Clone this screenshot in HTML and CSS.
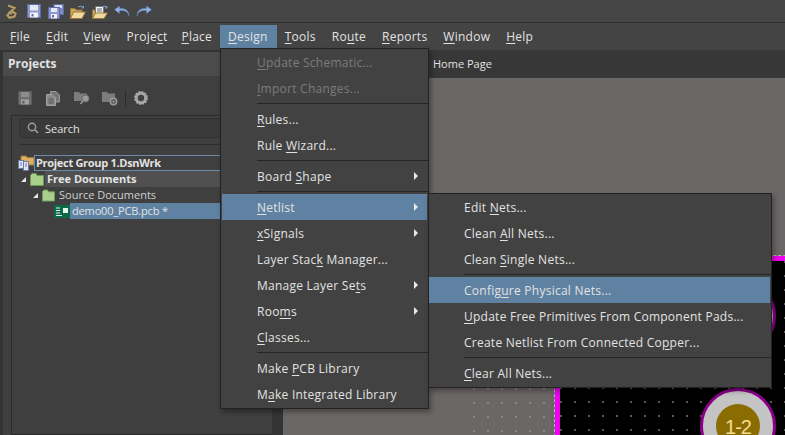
FILE: index.html
```html
<!DOCTYPE html>
<html lang="en">
  <head>
    <meta charset="UTF-8" />
    <title>Altium Designer</title>
    <link rel="stylesheet" href="styles.css">
  </head>

  <body>
    <div class="app">
      <!-- quick access bar -->
      <div class="quick">
        <svg class="logo" width="11" height="15" viewBox="0 0 11 15"><path d="M2 1.500 L8.500 4 L5.500 6.800 L9.500 9.500 L8.500 12.500 L3.500 13.800 L1.500 11.500 L3.500 8.500 L6 9.800" fill="none" stroke="#b49a62" stroke-width="2.200"/></svg>
        <svg class="q1" width="14" height="14" viewBox="0 0 14 14"><rect x=".5" y=".5" width="13" height="13" fill="#8d9ad0" stroke="#5f6ba6"/><rect x="3" y="1" width="8" height="5.500" fill="#e6e9f6"/><rect x="3" y="8.500" width="8" height="5" fill="#f4f4f4"/><rect x="4.500" y="10" width="2" height="2.500" fill="#5f6ba6"/></svg>
        <svg class="q2" width="16" height="15" viewBox="0 0 16 15"><rect x="5.500" y=".5" width="10" height="10" fill="#7f8cc4" stroke="#5f6ba6"/><rect x="7" y="1" width="7" height="3" fill="#d8dcf0"/><rect x=".5" y="3.500" width="11" height="11" fill="#8d9ad0" stroke="#5f6ba6"/><rect x="3" y="4" width="6" height="4" fill="#e6e9f6"/><rect x="3" y="10" width="6" height="4.500" fill="#f4f4f4"/><rect x="4" y="11" width="2" height="2.500" fill="#5f6ba6"/></svg>
        <svg class="q3" width="16" height="14" viewBox="0 0 16 14"><path d="M.5 3.500 H5 L6 5 H12 V13.500 H.5 Z" fill="#c9a860" stroke="#98793a"/><path d="M.5 13.500 L3.500 7 H15.500 L12 13.500 Z" fill="#f0d9a0" stroke="#98793a"/><path d="M8 2 Q11 0 13.500 2.500 M13.500 .8 V3 H11.500" fill="none" stroke="#7f9fc8"/></svg>
        <svg class="q4" width="16" height="14" viewBox="0 0 16 14"><path d="M.5 5 H4 V13.500 H.5 Z" fill="#c9a860" stroke="#98793a"/><rect x="3.500" y="1.500" width="8" height="8" fill="#f4f4f4" stroke="#777"/><path d="M5 4 H10 M5 6 H10" stroke="#667"/><path d="M.5 13.500 L3.500 8 H15.500 L12 13.500 Z" fill="#f0d9a0" stroke="#98793a"/><path d="M11 1.500 Q13 .5 15 2.500 M15 .8 V3 H13" fill="none" stroke="#7f9fc8"/></svg>
        <svg class="q5" width="16" height="10" viewBox="0 0 16 10"><path d="M15 10 C14 5 10 4 5.500 4.500 V7.500 L.5 3.700 L5.500 0 V2.500 C11 2 15 4 15 10 Z" fill="#8fb4e4" stroke="#5d82b6" stroke-width=".5"/></svg>
        <svg class="q6" width="16" height="10" viewBox="0 0 16 10"><path d="M1 10 C2 5 6 4 10.500 4.500 V7.500 L15.500 3.700 L10.500 0 V2.500 C5 2 1 4 1 10 Z" fill="#8fb4e4" stroke="#5d82b6" stroke-width=".5"/></svg>
      </div>

      <div class="menubar">
        <span class="top-item"><u>F</u>ile</span>
        <span class="top-item"><u>E</u>dit</span>
        <span class="top-item tight"><u>V</u>iew</span>
        <span class="top-item">Proje<u>c</u>t</span>
        <span class="top-item tighter"><u>P</u>lace</span>
        <span class="top-item open"><u>D</u>esign</span>
        <span class="top-item"><u>T</u>ools</span>
        <span class="top-item">Ro<u>u</u>te</span>
        <span class="top-item"><u>R</u>eports</span>
        <span class="top-item"><u>W</u>indow</span>
        <span class="top-item"><u>H</u>elp</span>
      </div>

      <div class="workspace">
        <div class="projects">
          <div class="panel-title">Projects</div>
          <div class="panel-tools">
            <svg width="14" height="14" viewBox="0 0 14 14"><rect x=".5" y=".5" width="13" height="13" fill="#6e6e6e" stroke="#5a5a5a"/><rect x="3" y="1" width="8" height="5" fill="#8c8c8c"/><rect x="3" y="8.500" width="8" height="5" fill="#a0a0a0"/><rect x="4.500" y="10" width="2" height="2.500" fill="#555"/></svg>
            <svg class="t2" width="14" height="15" viewBox="0 0 14 15"><path d="M4.500 .5 H10 L13.500 4 V11 H4.500 Z" fill="#777" stroke="#999"/><path d="M.5 3.500 H6 L9.500 7 V14.500 H.5 Z" fill="#8a8a8a" stroke="#a4a4a4"/><path d="M2.500 8 H7.500 M2.500 10 H7.500 M2.500 12 H7.500" stroke="#555"/></svg>
            <svg class="t3" width="16" height="14" viewBox="0 0 16 14"><path d="M0 1 H5 L6 2.500 H13 V10 H0 Z" fill="#7c7c7c"/><circle cx="11.500" cy="7.500" r="3.500" fill="#9a9a9a" stroke="#6a6a6a"/><path d="M9 10 L6.500 13" stroke="#9a9a9a" stroke-width="1.500"/></svg>
            <svg class="t4" width="16" height="15" viewBox="0 0 16 15"><path d="M0 1 H5 L6 2.500 H13 V11 H0 Z" fill="#7c7c7c"/><circle cx="11.500" cy="10.500" r="3.200" fill="#5a5a5a" stroke="#9a9a9a" stroke-width="1.500"/><circle cx="11.500" cy="10.500" r="1" fill="#9a9a9a"/></svg>
            <span class="tool-sep"></span>
            <svg width="14" height="14" viewBox="0 0 14 14"><circle cx="7" cy="7" r="4.700" fill="none" stroke="#a6a6a6" stroke-width="3"/><circle cx="7" cy="7" r="6.200" fill="none" stroke="#a6a6a6" stroke-width="1.500" stroke-dasharray="2 1.200"/></svg>
          </div>
          <div class="tree-box">
            <div class="search">
              <svg width="12" height="12" viewBox="0 0 12 12"><circle cx="5" cy="5" r="3.700" fill="none" stroke="#a0a0a0" stroke-width="1.400"/><path d="M8 8 L11 11" stroke="#a0a0a0" stroke-width="1.600"/></svg>
              <span>Search</span>
            </div>
            <div class="search-rule"></div>
            <div class="tree">
              <div class="node group">
                <svg width="17" height="16" viewBox="0 0 17 16"><path d="M3 1 H8 L9 2.500 H16 V10 H3 Z" fill="#e0b060" stroke="#a07c3a"/><rect x=".5" y="5.500" width="5" height="8" fill="#dfe3f2" stroke="#6a78ae"/><rect x="5.500" y="6.500" width="5" height="9" fill="#dfe3f2" stroke="#6a78ae"/><path d="M7 9 H9 M7 11 H9 M2 8 H4 M2 10 H4" stroke="#6a78ae"/></svg>
                <span class="label">Project Group 1.DsnWrk</span>
              </div>
              <div class="node free">
                <i class="twist"></i>
                <svg width="14" height="13" viewBox="0 0 14 13"><path d="M.5 2.500 L2 .5 H6 L7 2.500 H13.500 V12.500 H.5 Z" fill="#a8d08c" stroke="#6e9a58"/></svg>
                <span class="label">Free Documents</span>
              </div>
              <div class="node source">
                <i class="twist"></i>
                <svg width="13" height="13" viewBox="0 0 14 13"><path d="M.5 2.500 L2 .5 H6 L7 2.500 H13.500 V12.500 H.5 Z" fill="#a8d08c" stroke="#6e9a58"/></svg>
                <span class="label">Source Documents</span>
              </div>
              <div class="node doc">
                <svg width="16" height="13" viewBox="0 0 16 13"><rect width="16" height="13" fill="#0b6b48"/><path d="M2 3 H6 M2 5.500 H6 M2 8 H6 M2 10.500 H8" stroke="#e6f2ec"/><rect x="9" y="3" width="5" height="5" fill="#e6f2ec"/></svg>
                <span class="label">demo00_PCB.pcb *</span>
              </div>
            </div>
          </div>
        </div>

        <div class="docs">
          <div class="tabs"><span class="tab">Home Page</span></div>
          <div class="sheet">
            <div class="grid-zone"></div>
            <div class="board">
              <div class="pad pad-a"></div>
              <div class="pad pad-b"><div class="hole">1-2</div></div>
            </div>
          </div>
        </div>
      </div>

      <!-- open menu -->
      <div class="menu design">
        <div class="row off"><u>U</u>pdate Schematic...</div>
        <div class="row off"><u>I</u>mport Changes...</div>
        <div class="sep"></div>
        <div class="row"><u>R</u>ules...</div>
        <div class="row">Rule <u>W</u>izard...</div>
        <div class="sep"></div>
        <div class="row more">Board <u>S</u>hape</div>
        <div class="sep"></div>
        <div class="row more hot"><u>N</u>etlist</div>
        <div class="row more"><u>x</u>Signals</div>
        <div class="row">Layer Stac<u>k</u> Manager...</div>
        <div class="row more">Manage Layer Se<u>t</u>s</div>
        <div class="row more">Roo<u>m</u>s</div>
        <div class="row"><u>C</u>lasses...</div>
        <div class="sep"></div>
        <div class="row">Make <u>P</u>CB Library</div>
        <div class="row">M<u>a</u>ke Integrated Library</div>
      </div>

      <div class="menu netlist">
        <div class="row">Edit <u>N</u>ets...</div>
        <div class="row">Clean <u>A</u>ll Nets...</div>
        <div class="row">Clean <u>S</u>ingle Nets...</div>
        <div class="sep"></div>
        <div class="row hot">Config<u>u</u>re Physical Nets...</div>
        <div class="row"><u>U</u>pdate Free Primitives From Component Pads...</div>
        <div class="row">Create Netlist From Connected Co<u>p</u>per...</div>
        <div class="sep"></div>
        <div class="row"><u>C</u>lear All Nets...</div>
      </div>
    </div>
  </body>
</html>
```

FILE: styles.css
```css
* {
  box-sizing: border-box;
}

body {
  margin: 0;
  background: #333;
}

.app {
  position: relative;
  width: 785px;
  height: 435px;
  overflow: hidden;
  display: flex;
  flex-direction: column;
  font-family: "Open Sans", "Noto Sans", sans-serif;
  font-size: 12px;
  color: #e2e2e2;
}

u {
  text-underline-offset: 2px;
}

/* quick access bar */
.quick {
  height: 23px;
  flex: none;
  display: flex;
  align-items: flex-start;
  padding: 4px 0 0 6px;
  background: #454545;
  border-bottom: 1px solid #2f2f2f;
}

.quick svg {
  flex: none;
}

.q1 {
  margin-left: 10px;
}

.q2 {
  margin-left: 7px;
}

.q3 {
  margin: 1px 0 0 6px;
}

.q4 {
  margin: 1px 0 0 6px;
}

.q5 {
  margin: 2px 0 0 6px;
}

.q6 {
  margin: 2px 0 0 6px;
}

/* menu bar */
.menubar {
  height: 27px;
  flex: none;
  display: flex;
  padding: 2px 0 0 2px;
  background: #444;
}

.top-item {
  height: 23px;
  line-height: 23px;
  padding: 0 8px;
  letter-spacing: 0.25px;
  white-space: nowrap;
}

.top-item.tight {
  margin-left: -1px;
}

.top-item.tighter {
  margin-left: -2px;
}

.top-item.open {
  padding-right: 9px;
  background: #5f82a3;
}

/* main area */
.workspace {
  flex: 1;
  display: flex;
  min-height: 0;
  background: #343434;
}

.projects {
  width: 269px;
  margin: 2px 0 0 3px;
  background: #3f3f3f;
  flex: none;
  display: flex;
  flex-direction: column;
}

.panel-title {
  height: 24px;
  line-height: 24px;
  padding-left: 5px;
  font-weight: 700;
  background: #4b4b4b;
}

.panel-tools {
  height: 39px;
  display: flex;
  align-items: center;
  padding: 5px 0 0 15px;
}

.panel-tools svg {
  flex: none;
}

.t2 {
  margin-left: 14px;
}

.t3 {
  margin-left: 14px;
}

.t4 {
  margin-left: 12px;
}

.tool-sep {
  width: 1px;
  height: 15px;
  margin: 0 8px 0 7px;
  background: #2a2a2a;
}

.tree-box {
  flex: 1;
  margin-left: 8px;
  padding: 2px 0 0 7px;
  border: 1px solid #2c2c2c;
  border-right: 0;
}

.search {
  height: 20px;
  display: flex;
  align-items: center;
  gap: 6px;
  padding-left: 7px;
  font-size: 11px;
  background: #3a3a3a;
  border: 1px solid #303030;
  border-radius: 4px;
}

.search-rule {
  height: 1px;
  margin-top: 6px;
  background: #2d2d2d;
}

.tree {
  margin: 10px 0 0 -3px;
}

.node {
  height: 16px;
  display: flex;
  align-items: center;
  white-space: nowrap;
}

.node svg {
  flex: none;
}

.node .label {
  flex: 1;
  height: 100%;
  line-height: 16px;
  padding-left: 2px;
}

.twist {
  width: 0;
  height: 0;
  flex: none;
  margin-right: 4px;
  border-left: 5px solid transparent;
  border-bottom: 5px solid #e6e6e6;
}

.group {
  margin-left: 2px;
}

.group .label {
  margin-left: -1px;
  padding-left: 1px;
  font-weight: 700;
  font-size: 11px;
  letter-spacing: -0.3px;
  border: 1px solid #6a8caa;
  line-height: 14px;
}

.free {
  margin-left: 5px;
}

.free .label {
  margin-left: 1px;
  font-weight: 700;
  font-size: 11px;
  background: #505050;
}

.source {
  margin-left: 17px;
}

.source .label {
  margin-left: 2px;
  font-size: 11px;
  color: #cfcfcf;
}

.doc {
  margin-left: 38px;
}

.doc .label {
  padding-left: 2px;
  font-size: 11px;
  letter-spacing: -0.15px;
  background: #5f82a3;
}

/* documents */
.docs {
  flex: 1;
  margin-left: 11px;
  display: flex;
  flex-direction: column;
  min-width: 0;
}

.tabs {
  height: 28px;
  flex: none;
  padding-left: 150px;
  line-height: 28px;
  background: #373737;
}

.tab {
  font-size: 11px;
}

.sheet {
  flex: 1;
  position: relative;
  overflow: hidden;
  background-color: #6b6766;
}

/* grid dots only show round the board */
.grid-zone {
  position: absolute;
  left: 190px;
  top: 310px;
  width: 82px;
  height: 50px;
  background-image: radial-gradient(circle at 1px 1px, #98948f 0.6px, transparent 1px);
  background-size: 14px 14px;
}

/* board sits at its own place on the sheet */
.board {
  position: absolute;
  left: 272px;
  top: 178px;
  width: 300px;
  height: 200px;
  background-color: #000;
  background-image: radial-gradient(circle at 1px 1px, #7a7a7a 0.6px, transparent 1px);
  background-size: 14px 14px;
  border-top: 5px solid #f000f0;
  border-left: 5px solid #f000f0;
  outline: 1px dashed #b8b4b2;
}

.pad {
  position: absolute;
  width: 76px;
  height: 76px;
  display: flex;
  align-items: center;
  justify-content: center;
  border: 3px solid #8b008b;
  border-radius: 50%;
  background: #c4c4c4;
}

.pad-a {
  left: 140px;
  top: 17px;
}

.pad-b {
  left: 140px;
  top: 127px;
}

.hole {
  width: 44px;
  height: 44px;
  padding-top: 15px;
  border-radius: 50%;
  background: #8b6c00;
  color: #f3dc96;
  font-family: "Liberation Sans", sans-serif;
  font-size: 20px;
  letter-spacing: -1px;
  line-height: 16px;
  text-align: center;
}

/* menus */
.menu {
  position: absolute;
  padding: 0 1px;
  background: #424242;
  border: 1px solid #232323;
  box-shadow: 2px 3px 5px rgba(0, 0, 0, 0.35);
}

.design {
  left: 220px;
  top: 48px;
  width: 209px;
  height: 361px;
}

.netlist {
  left: 428px;
  top: 193px;
  width: 344px;
  height: 195px;
  padding-left: 0;
}

.row {
  position: relative;
  height: 26px;
  line-height: 28px;
  padding-left: 35px;
  letter-spacing: 0.25px;
  white-space: nowrap;
  color: #e2e2e2;
}

.row.off {
  color: #7c7c7c;
}

.row.hot {
  background: #5f82a3;
}

.row.more::after {
  content: "";
  position: absolute;
  right: 9px;
  top: 9px;
  border-left: 4px solid #e8e8e8;
  border-top: 4px solid transparent;
  border-bottom: 4px solid transparent;
}

.sep {
  height: 1px;
  margin: 2px -1px 2px 35px;
  background: #262626;
}
```
